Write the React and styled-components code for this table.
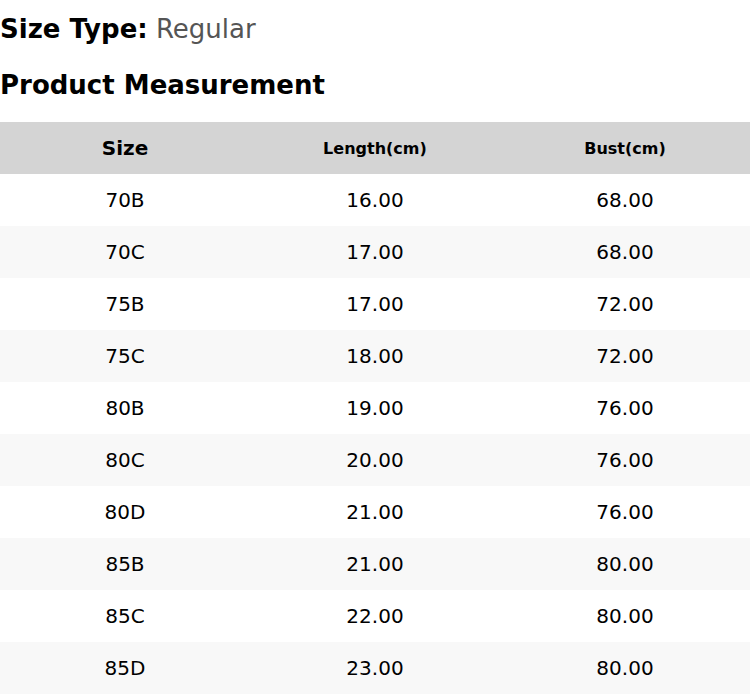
import React from "react";
import styled, { createGlobalStyle } from "styled-components";

const GlobalStyle = createGlobalStyle`
  body {
    margin: 0;
    background: #fff;
    font-family: "DejaVu Sans", sans-serif;
    color: #000;
  }
`;

const rows = [
  ["70B", "16.00", "68.00"],
  ["70C", "17.00", "68.00"],
  ["75B", "17.00", "72.00"],
  ["75C", "18.00", "72.00"],
  ["80B", "19.00", "76.00"],
  ["80C", "20.00", "76.00"],
  ["80D", "21.00", "76.00"],
  ["85B", "21.00", "80.00"],
  ["85C", "22.00", "80.00"],
  ["85D", "23.00", "80.00"],
];

const App = () => {
  return (
    <Wrapper>
      <GlobalStyle />
      <SizeType>
        <strong>Size Type:</strong> <span>Regular</span>
      </SizeType>
      <Title>Product Measurement</Title>
      <Table>
        <thead>
          <HeadRow>
            <HeadCell $big>Size</HeadCell>
            <HeadCell>Length(cm)</HeadCell>
            <HeadCell>Bust(cm)</HeadCell>
          </HeadRow>
        </thead>
        <tbody>
          {rows.map((r, i) => (
            <Row key={r[0]} $striped={i % 2 === 1}>
              {r.map((c, j) => (
                <Cell key={j}>{c}</Cell>
              ))}
            </Row>
          ))}
        </tbody>
      </Table>
    </Wrapper>
  );
};

export default App;

const Wrapper = styled.div`
  width: 750px;
`;

const SizeType = styled.div`
  font-size: 26px;
  line-height: 30px;
  padding-top: 14px;

  strong {
    font-weight: 700;
  }

  span {
    color: #555;
  }
`;

const Title = styled.h2`
  margin: 26px 0 0;
  font-size: 26px;
  font-weight: 700;
  line-height: 30px;
  height: 52px;
`;

const Table = styled.table`
  width: 100%;
  border-collapse: collapse;
  table-layout: fixed;
`;

const HeadRow = styled.tr`
  background: #d4d4d4;
  height: 52px;
`;

const HeadCell = styled.th`
  width: 33.333%;
  padding: 0;
  text-align: center;
  font-weight: 700;
  font-size: ${(p) => (p.$big ? "20px" : "16px")};
`;

const Row = styled.tr`
  height: 52px;
  background: ${(p) => (p.$striped ? "#f8f8f8" : "#fff")};
`;

const Cell = styled.td`
  padding: 0;
  text-align: center;
  font-size: 20px;
`;
